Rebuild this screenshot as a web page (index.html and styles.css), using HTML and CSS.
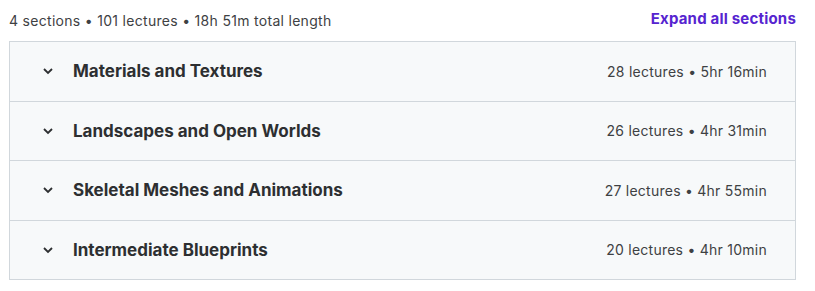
FILE: index.html
```html
<!DOCTYPE html>
<html lang="en">
  <head>
    <meta charset="utf-8" />
    <meta name="viewport" content="width=device-width, initial-scale=1.0" />
    <title>Course content</title>
    <link rel="stylesheet" href="styles.css">
  </head>

  <body>
    <div class="indhold">
      <header class="top">
        <span class="info">4 sections • 101 lectures • 18h 51m total length</span>
        <button class="udvid">Expand all sections</button>
      </header>
      <section class="sektioner">
        <div class="sektion">
          <svg class="pil" viewBox="0 0 12 8" width="12" height="8"><path d="M2 2 L6 6 L10 2" fill="none" stroke="#2d2f31" stroke-width="1.8"/></svg>
          <h2 class="titel">Materials and Textures</h2>
          <span class="laengde">28 lectures • 5hr 16min</span>
        </div>
        <div class="sektion">
          <svg class="pil" viewBox="0 0 12 8" width="12" height="8"><path d="M2 2 L6 6 L10 2" fill="none" stroke="#2d2f31" stroke-width="1.8"/></svg>
          <h2 class="titel">Landscapes and Open Worlds</h2>
          <span class="laengde">26 lectures • 4hr 31min</span>
        </div>
        <div class="sektion">
          <svg class="pil" viewBox="0 0 12 8" width="12" height="8"><path d="M2 2 L6 6 L10 2" fill="none" stroke="#2d2f31" stroke-width="1.8"/></svg>
          <h2 class="titel">Skeletal Meshes and Animations</h2>
          <span class="laengde">27 lectures • 4hr 55min</span>
        </div>
        <div class="sektion">
          <svg class="pil" viewBox="0 0 12 8" width="12" height="8"><path d="M2 2 L6 6 L10 2" fill="none" stroke="#2d2f31" stroke-width="1.8"/></svg>
          <h2 class="titel">Intermediate Blueprints</h2>
          <span class="laengde">20 lectures • 4hr 10min</span>
        </div>
      </section>
    </div>
  </body>
</html>
```

FILE: styles.css
```css
body {
  margin: 0;
  font-family: Inter, "Noto Sans", sans-serif;
  color: #2d2f31;
  background: white;
}

.indhold {
  width: 787px;
  margin-left: 9px;
}

.top {
  display: flex;
  justify-content: space-between;
  align-items: center;
  height: 40px;
  padding-bottom: 1px;
}

.info {
  font-size: 14px;
  letter-spacing: 0.3px;
  color: #3e4143;
}

.udvid {
  border: none;
  background: none;
  padding: 0;
  font-family: inherit;
  font-size: 15px;
  font-weight: 700;
  letter-spacing: 0.2px;
  color: #5624d0;
  cursor: pointer;
  margin-top: -3px;
}

.sektioner {
  border: 1px solid #d1d7dc;
  border-bottom: none;
}

.sektion {
  display: flex;
  align-items: center;
  height: 58.5px;
  padding: 0 28px 0 32px;
  background: #f7f9fa;
  border-bottom: 1px solid #d1d7dc;
  cursor: pointer;
}

.pil {
  flex-shrink: 0;
}

.titel {
  flex: 1;
  margin: 0 0 0 19px;
  font-size: 17px;
  font-weight: 700;
}

.laengde {
  font-size: 14px;
  letter-spacing: 0.25px;
  color: #3e4143;
}
```
